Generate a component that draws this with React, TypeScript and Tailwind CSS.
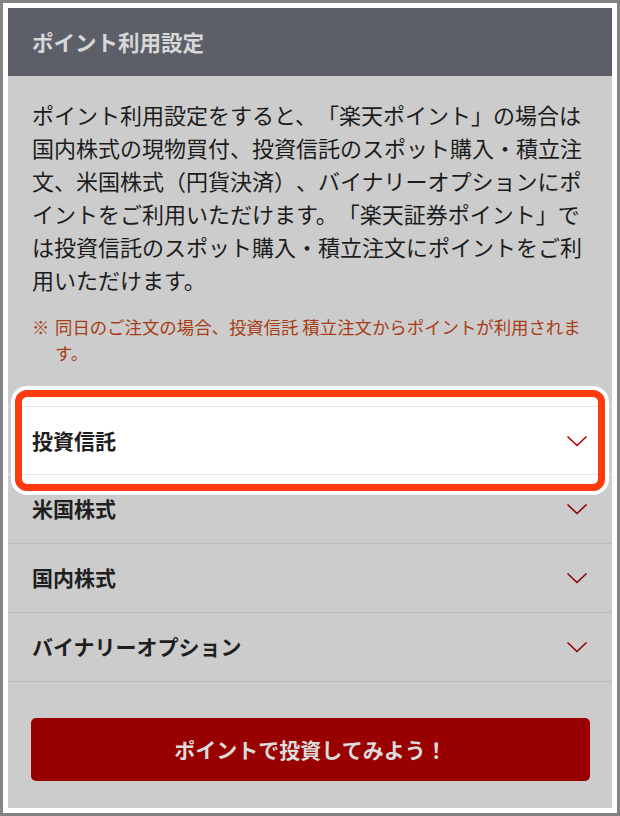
import React from "react";

const lines = [
  "ポイント利用設定をすると、「楽天ポイント」の場合は",
  "国内株式の現物買付、投資信託のスポット購入・積立注",
  "文、米国株式（円貨決済）、バイナリーオプションにポ",
  "イントをご利用いただけます。「楽天証券ポイント」で",
  "は投資信託のスポット購入・積立注文にポイントをご利",
  "用いただけます。",
];

const items = ["投資信託", "米国株式", "国内株式", "バイナリーオプション"];

function Chevron({ color }: { color: string }) {
  return (
    <svg width="22" height="12" viewBox="0 0 22 12" fill="none">
      <path d="M1.5 1.5 L11 10.5 L20.5 1.5" stroke={color} strokeWidth="1.6" />
    </svg>
  );
}

export default function App() {
  return (
    <div
      className="w-[620px] h-[816px] bg-[#838383] p-[3px] [text-spacing-trim:space-all] [font-feature-settings:'chws'_0]"
      style={{ fontFamily: '"Noto Sans CJK JP", "Noto Sans", sans-serif' }}
    >
      <div className="h-full bg-white p-[5px]">
        <div className="h-full flex flex-col bg-[#cccccc]">
          {/* header */}
          <div className="h-[68px] shrink-0 bg-[#5d5f68] px-6 flex items-center">
            <span className="text-[21.5px] font-bold text-[#d8d8d8]">ポイント利用設定</span>
          </div>

          {/* description */}
          <div className="px-6 pt-[22px]">
            <p className="text-[22px] leading-[33px] text-[#1c1c1c]">
              {lines.map((l) => (
                <span key={l} className="block whitespace-nowrap">
                  {l}
                </span>
              ))}
            </p>
            <div className="mt-[18px] flex text-[17.4px] leading-[26px] text-[#a73c16]">
              <span className="w-[23px] shrink-0">※</span>
              <span className="whitespace-nowrap">
                同日のご注文の場合、投資信託 積立注文からポイントが利用されま
                <br />
                す。
              </span>
            </div>
          </div>

          {/* accordion */}
          <div className="mt-[40px]">
            {items.map((name, i) => {
              const first = i === 0;
              return (
                <div key={name} className="relative">
                  {first && (
                    <div className="absolute top-[-9px] bottom-[-9px] left-[14px] right-[14px] bg-white" />
                  )}
                  <div
                    className={`relative h-[69px] px-6 flex items-center justify-between border-b ${
                      first ? "border-t border-[#e6e6e6]" : "border-[#bcbcbc]"
                    }`}
                  >
                    <span className="text-[21px] font-bold text-[#1f1f1f]">{name}</span>
                    <Chevron color={first ? "#b00000" : "#8e0000"} />
                  </div>
                  {first && (
                    <div className="absolute top-[-16px] bottom-[-16px] left-[7px] right-[7px] rounded-[12px] border-[7px] border-[#ff3a0e] shadow-[0_0_0_4px_#ffffff] pointer-events-none" />
                  )}
                </div>
              );
            })}
          </div>

          {/* button */}
          <div className="mt-[36px] pl-[23px] pr-[22px]">
            <button className="w-full h-[63px] rounded-[5px] bg-[#990000] text-[21px] font-bold text-[#dcdcdc] flex items-center justify-center">
              ポイントで投資してみよう！
            </button>
          </div>
        </div>
      </div>
    </div>
  );
}
